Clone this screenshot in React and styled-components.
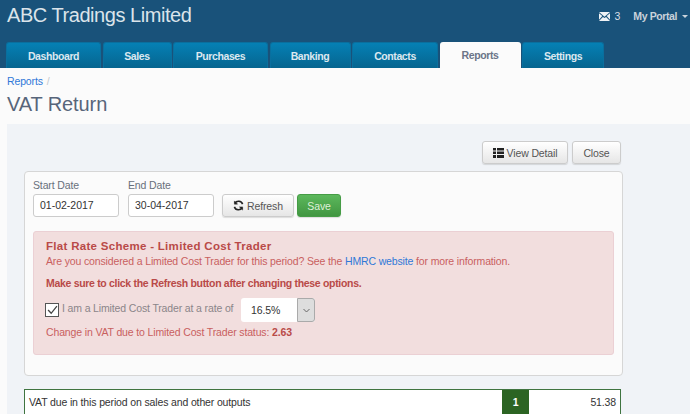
import React from 'react';
import styled, { createGlobalStyle } from 'styled-components';

const GlobalStyle = createGlobalStyle`
    html, body {
        margin: 0;
        padding: 0;
        height: 414px;
        overflow: hidden;
        background: #fbfbfb;
        font-family: "Liberation Sans", Arial, sans-serif;
    }
`;

const Header = styled.header`
    background: #19527a;
    height: 68px;
    display: flex;
    flex-direction: column;
    justify-content: space-between;
`;

const TopRow = styled.div`
    display: flex;
    justify-content: space-between;
    align-items: flex-start;
    padding: 0 2px 0 7px;
`;

const Brand = styled.h1`
    margin: 0;
    padding-top: 1px;
    font-size: 20px;
    letter-spacing: -0.45px;
    line-height: 28px;
    font-weight: 400;
    color: #dbe4ea;
`;

const UserMenu = styled.div`
    display: flex;
    align-items: center;
    padding-top: 10px;
    font-size: 10.5px;
    line-height: 13px;
    color: #d8dfe5;
`;

const Mail = styled.span`
    display: flex;
    align-items: center;
    gap: 4px;
    margin-right: 13px;
    svg {
        display: block;
    }
`;

const Portal = styled.span`
    letter-spacing: -0.4px;
    font-weight: 700;
    color: #c9d3db;
    display: flex;
    align-items: center;
    gap: 5px;
    &::after {
        content: '';
        border-top: 3px solid #c9d3db;
        border-left: 3px solid transparent;
        border-right: 3px solid transparent;
    }
`;

const Tabs = styled.nav`
    display: flex;
    padding-left: 6px;
    gap: 1.5px;
`;

const Tab = styled.div`
    box-sizing: border-box;
    width: ${(props) => props.$w}px;
    height: 26px;
    display: flex;
    align-items: center;
    justify-content: center;
    font-size: 10.5px;
    letter-spacing: -0.4px;
    font-weight: 700;
    border-radius: 3px 3px 0 0;
    color: ${(props) => (props.$active ? '#6b7488' : '#dce8f0')};
    background: ${(props) => (props.$active ? '#fbfbfb' : 'linear-gradient(#0580b5, #06658f)')};
    border: ${(props) => (props.$active ? 'none' : '1px solid #0a6f9e')};
    border-bottom: none;
`;

const SubHeader = styled.div`
    height: 56px;
    padding: 7px 7px 0;
    box-sizing: border-box;
    background: #fbfbfb;
`;

const Crumbs = styled.div`
    font-size: 10.5px;
    letter-spacing: -0.14px;
    line-height: 13px;
    color: #2f78d8;
    span {
        color: #c4c8cc;
        margin-left: 4px;
    }
`;

const Title = styled.h2`
    margin: 3px 0 0;
    font-size: 20px;
    letter-spacing: -0.1px;
    line-height: 26px;
    font-weight: 400;
    color: #57657a;
`;

const Content = styled.main`
    margin-left: 7px;
    height: 290px;
    padding: 17px 0 0 17px;
    box-sizing: border-box;
    background: #f0f3f7;
    overflow: hidden;
`;

const Actions = styled.div`
    width: 597px;
    display: flex;
    justify-content: flex-end;
    gap: 4px;
    margin-bottom: 7px;
`;

const Button = styled.button`
    box-sizing: border-box;
    width: ${(props) => props.$w}px;
    height: 23px;
    padding: 0;
    display: inline-flex;
    align-items: center;
    justify-content: center;
    gap: 3px;
    font: 400 10.5px "Liberation Sans", Arial, sans-serif;
    letter-spacing: -0.14px;
    color: #555;
    border: 1px solid #ccc;
    border-radius: 3px;
    background: linear-gradient(#fff, #e6e6e6);
    box-shadow: 0 1px 1px rgba(0, 0, 0, 0.12);
    svg {
        display: block;
    }
`;

const SaveButton = styled(Button)`
    color: #dff0d8;
    border-color: #469c46;
    background: linear-gradient(#5cb85c, #419641);
`;

const Panel = styled.section`
    box-sizing: border-box;
    width: 599px;
    height: 205px;
    padding: 7px 8px 0;
    background: #fbfbfb;
    border: 1px solid #d6d6d6;
    border-radius: 4px;
    margin-bottom: 13px;
`;

const DateRow = styled.div`
    display: flex;
    align-items: flex-end;
    height: 38px;
`;

const Field = styled.label`
    display: flex;
    flex-direction: column;
    gap: 2px;
    margin-right: 9px;
    font-size: 10.5px;
    letter-spacing: -0.14px;
    line-height: 13px;
    color: #68707c;
`;

const DateInput = styled.div`
    box-sizing: border-box;
    width: 86px;
    height: 23px;
    padding-left: 6px;
    display: flex;
    align-items: center;
    background: #fff;
    border: 1px solid #ccc;
    border-radius: 3px;
    font-size: 10.5px;
    letter-spacing: 0;
    color: #333;
`;

const Controls = styled.div`
    display: flex;
    gap: 3px;
    margin-left: -1px;
`;

const Alert = styled.div`
    box-sizing: border-box;
    height: 124px;
    margin-top: 14px;
    padding: 7px 12px 0;
    background: #f2dede;
    border: 1px solid #ebd0d4;
    border-radius: 3px;
    font-size: 10.5px;
    letter-spacing: -0.14px;
    line-height: 13px;
    color: #c9605e;
`;

const AlertTitle = styled.h4`
    margin: 0;
    font-size: 11.5px;
    line-height: 14px;
    font-weight: 700;
    letter-spacing: 0.3px;
    color: #b94a48;
`;

const AlertText = styled.p`
    margin: 0;
    color: ${(props) => (props.$strong ? '#b94a48' : '#c9605e')};
    font-weight: ${(props) => (props.$strong ? 700 : 400)};
    letter-spacing: ${(props) => (props.$strong ? '-0.31px' : 'inherit')};
    margin-top: ${(props) => props.$top || 0}px;
    a {
        color: #2f78d8;
    }
    b {
        color: #b94a48;
    }
`;

const RateRow = styled.div`
    display: flex;
    align-items: flex-start;
    margin-top: 8px;
    margin-left: -1px;
`;

const Check = styled.span`
    box-sizing: border-box;
    width: 14px;
    height: 14px;
    margin-top: 5px;
    margin-right: 3px;
    background: #fff;
    border: 1px solid #555;
    display: flex;
    align-items: center;
    justify-content: center;
`;

const RateLabel = styled.span`
    color: #8b8589;
    margin-top: 4px;
    width: 179px;
`;

const Select = styled.div`
    box-sizing: border-box;
    width: 74px;
    height: 24px;
    display: flex;
    background: #fff;
    border-radius: 3px;
    font-size: 10.5px;
    color: #333;
`;

const SelectValue = styled.span`
    flex: 1;
    padding-left: 10px;
    display: flex;
    align-items: center;
`;

const SelectArrow = styled.span`
    box-sizing: border-box;
    width: 18px;
    display: flex;
    align-items: center;
    justify-content: center;
    background: #ddd;
    border: 1px solid #aaa;
    border-radius: 0 3px 3px 0;
`;

const VatTable = styled.div`
    box-sizing: border-box;
    width: 597px;
    height: 40px;
    display: flex;
    background: #fff;
    border: 1px solid #3f7440;
    font-size: 10.5px;
    letter-spacing: -0.14px;
    color: #333;
`;

const VatLabel = styled.span`
    flex: 1;
    padding: 6px 0 0 4px;
    line-height: 13px;
`;

const VatBox = styled.span`
    width: 27px;
    padding-top: 6px;
    line-height: 13px;
    text-align: center;
    font-weight: 700;
    color: #fff;
    background: #2c6423;
`;

const VatValue = styled.span`
    width: 91px;
    padding: 6px 4px 0 0;
    box-sizing: border-box;
    line-height: 13px;
    text-align: right;
`;

const tabs = [
    ['Dashboard', 95],
    ['Sales', 69],
    ['Purchases', 95],
    ['Banking', 81],
    ['Contacts', 86],
    ['Reports', 81],
    ['Settings', 82],
];

const App = () => (
    <>
        <GlobalStyle />
        <Header>
            <TopRow>
                <Brand>ABC Tradings Limited</Brand>
                <UserMenu>
                    <Mail>
                        <svg width="11" height="9" viewBox="0 0 10 8">
                            <path d="M0 0h10L5 4.2z" fill="#eef2f5" />
                            <path d="M0 1l3 2.6L0 7zM10 1L7 3.6 10 7zM0 8l3.6-3.6L5 5.4l1.4-1L10 8z" fill="#eef2f5" />
                        </svg>
                        3
                    </Mail>
                    <Portal>My Portal</Portal>
                </UserMenu>
            </TopRow>
            <Tabs>
                {tabs.map(([name, w]) => (
                    <Tab key={name} $w={w} $active={name === 'Reports'}>
                        {name}
                    </Tab>
                ))}
            </Tabs>
        </Header>
        <SubHeader>
            <Crumbs>
                Reports<span>/</span>
            </Crumbs>
            <Title>VAT Return</Title>
        </SubHeader>
        <Content>
            <Actions>
                <Button $w={86}>
                    <svg width="11" height="10" viewBox="0 0 11 10" fill="#222">
                        <path d="M0 0h3v2.5H0zM4 0h7v2.5H4zM0 3.5h3V6H0zM4 3.5h7V6H4zM0 7h3v3H0zM4 7h7v3H4z" />
                    </svg>
                    View Detail
                </Button>
                <Button $w={49}>Close</Button>
            </Actions>
            <Panel>
                <DateRow>
                    <Field>
                        Start Date
                        <DateInput>01-02-2017</DateInput>
                    </Field>
                    <Field>
                        End Date
                        <DateInput>30-04-2017</DateInput>
                    </Field>
                    <Controls>
                        <Button $w={72}>
                            <svg width="11" height="11" viewBox="0 0 24 24" fill="none" stroke="#222" strokeWidth="3.4">
                                <path d="M21 9a9.5 9.5 0 0 0-17-2" />
                                <path d="M3 15a9.5 9.5 0 0 0 17 2" />
                                <path d="M3 2v7h7z" fill="#222" strokeWidth="1" />
                                <path d="M21 22v-7h-7z" fill="#222" strokeWidth="1" />
                            </svg>
                            Refresh
                        </Button>
                        <SaveButton $w={44}>Save</SaveButton>
                    </Controls>
                </DateRow>
                <Alert>
                    <AlertTitle>Flat Rate Scheme - Limited Cost Trader</AlertTitle>
                    <AlertText $top={2}>
                        Are you considered a Limited Cost Trader for this period? See the <a>HMRC website</a> for more information.
                    </AlertText>
                    <AlertText $strong $top={9}>
                        Make sure to click the Refresh button after changing these options.
                    </AlertText>
                    <RateRow>
                        <Check>
                            <svg width="11" height="10" viewBox="0 0 10 9" fill="none" stroke="#444" strokeWidth="1.2">
                                <path d="M1 4.5l2.8 3L9 1" />
                            </svg>
                        </Check>
                        <RateLabel>I am a Limited Cost Trader at a rate of</RateLabel>
                        <Select>
                            <SelectValue>16.5%</SelectValue>
                            <SelectArrow>
                                <svg width="7" height="5" viewBox="0 0 7 5" fill="none" stroke="#666">
                                    <path d="M.5 1l3 3 3-3" />
                                </svg>
                            </SelectArrow>
                        </Select>
                    </RateRow>
                    <AlertText $top={4}>
                        Change in VAT due to Limited Cost Trader status: <b>2.63</b>
                    </AlertText>
                </Alert>
            </Panel>
            <VatTable>
                <VatLabel>VAT due in this period on sales and other outputs</VatLabel>
                <VatBox>1</VatBox>
                <VatValue>51.38</VatValue>
            </VatTable>
        </Content>
    </>
);

export default App;
